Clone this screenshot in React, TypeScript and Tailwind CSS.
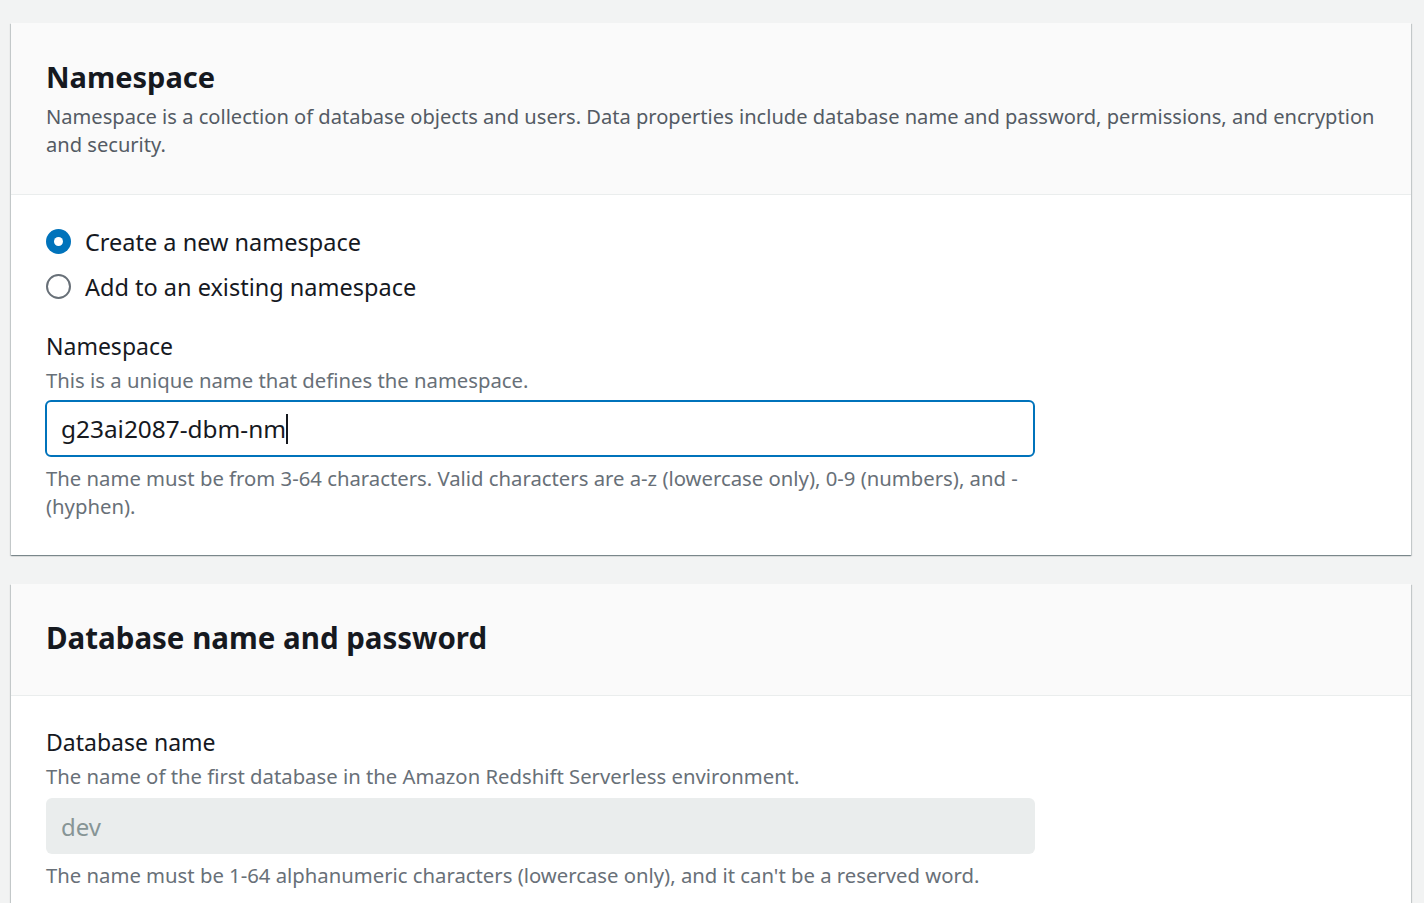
import { useState } from 'react';

const font = { fontFamily: '"Noto Sans", "Open Sans", Arial, sans-serif' };

const Radio = ({ checked, label, onClick }: { checked: boolean; label: string; onClick: () => void }) => (
  <button type="button" onClick={onClick} className="flex items-center gap-[14px] h-[45px] text-left">
    {checked ? (
      <span className="w-[25px] h-[25px] rounded-full bg-[#0073bb] flex items-center justify-center">
        <span className="w-[9px] h-[9px] rounded-full bg-white" />
      </span>
    ) : (
      <span className="w-[25px] h-[25px] rounded-full border-2 border-[#687078] bg-white" />
    )}
    <span className="text-[23.5px] text-[#16191f] leading-[30px]">{label}</span>
  </button>
);

const App = () => {
  const [mode, setMode] = useState(1);
  const [ns, setNs] = useState('g23ai2087-dbm-nm');

  return (
    <div className="min-h-[100vh] bg-[#f2f3f3] pl-[11px] pr-[13px] pt-[23px] pb-[40px]" style={font}>
      <div className="bg-white shadow-[0_1px_1px_0_rgba(0,28,36,0.3),1px_1px_1px_0_rgba(0,28,36,0.15),-1px_1px_1px_0_rgba(0,28,36,0.15)]">
        <div className="bg-[#fafafa] border-b border-[#eaeded] px-[35px] pt-[34px] pb-[35px]">
          <h2 className="text-[29px] font-bold text-[#16191f] leading-[40px]">Namespace</h2>
          <p className="text-[20.1px] text-[#545b64] leading-[28px] mt-[6px]">
            Namespace is a collection of database objects and users. Data properties include database name and password, permissions, and encryption and security.
          </p>
        </div>
        <div className="px-[35px] pt-[24px] pb-[35px]">
          <div className="flex flex-col">
            <Radio checked={mode === 1} label="Create a new namespace" onClick={() => setMode(1)} />
            <Radio checked={mode === 2} label="Add to an existing namespace" onClick={() => setMode(2)} />
          </div>
          <div className="mt-[22px]">
            <div className="text-[23px] text-[#16191f] leading-[30px]">Namespace</div>
            <div className="text-[20.3px] text-[#687078] leading-[28px] mt-[5px]">This is a unique name that defines the namespace.</div>
            <div className="relative mt-[6px] w-[990px] h-[57px] -ml-[1px]">
              <input
                value={ns}
                onChange={(e) => setNs(e.target.value)}
                className="block w-full h-full border-2 border-[#0073bb] rounded-[6px] px-[14px] text-[24.4px] text-[#16191f] caret-transparent outline-none"
                style={font}
              />
              {/* fake caret after the typed value */}
              <div className="pointer-events-none absolute inset-0 flex items-center px-[16px] text-[24.4px]" style={font}>
                <span className="invisible whitespace-pre">{ns}</span>
                <span className="w-[2px] h-[30px] bg-[#16191f]" />
              </div>
            </div>
            <div className="w-[990px] text-[20.3px] text-[#687078] leading-[28px] mt-[7px]">
              The name must be from 3-64 characters. Valid characters are a-z (lowercase only), 0-9 (numbers), and - (hyphen).
            </div>
          </div>
        </div>
      </div>

      <div className="mt-[29px] bg-white shadow-[0_1px_1px_0_rgba(0,28,36,0.3),1px_1px_1px_0_rgba(0,28,36,0.15),-1px_1px_1px_0_rgba(0,28,36,0.15)]">
        <div className="bg-[#fafafa] border-b border-[#eaeded] px-[35px] pt-[33px] pb-[36px]">
          <h2 className="text-[29.5px] font-bold text-[#16191f] leading-[42px]">Database name and password</h2>
        </div>
        <div className="px-[35px] pt-[31px] pb-[36px]">
          <div className="text-[23px] text-[#16191f] leading-[30px]">Database name</div>
          <div className="text-[20.3px] text-[#687078] leading-[28px] mt-[5px]">The name of the first database in the Amazon Redshift Serverless environment.</div>
          <input
            value="dev"
            disabled
            readOnly
            className="block mt-[8px] w-[989px] h-[56px] rounded-[6px] bg-[#eaeded] px-[15px] text-[24px] text-[#879596]"
            style={font}
          />
          <div className="text-[20.3px] text-[#687078] leading-[28px] mt-[7px]">
            The name must be 1-64 alphanumeric characters (lowercase only), and it can't be a reserved word.
          </div>
        </div>
      </div>
    </div>
  );
};

export default App;
